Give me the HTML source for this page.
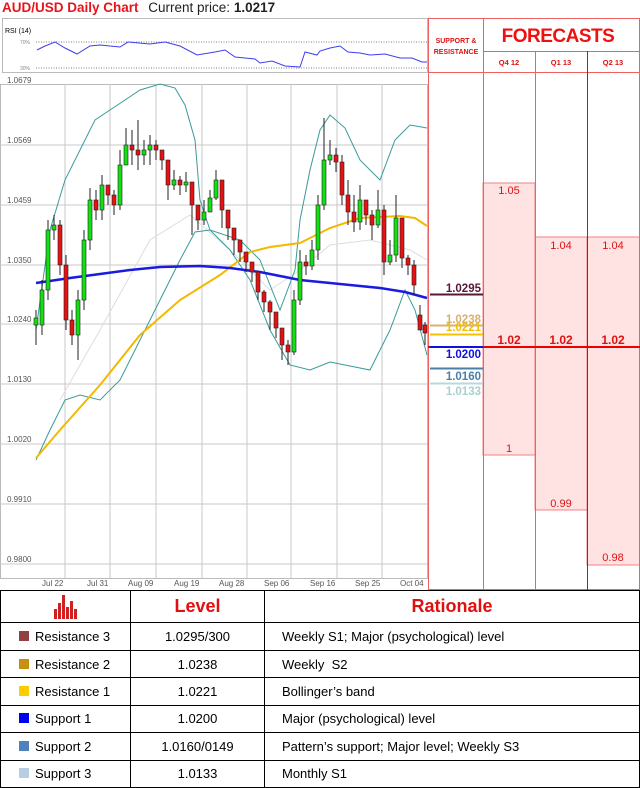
<!DOCTYPE html>
<html><head><meta charset="utf-8"><style>
body{margin:0;width:640px;height:788px;background:#fff;font-family:"Liberation Sans",sans-serif;overflow:hidden;position:relative}
.t{position:absolute;white-space:nowrap}
table{border-collapse:collapse;position:absolute;left:0;top:590px;width:640px;height:198px;table-layout:fixed}
td{border:1px solid #000;font-size:13px;padding:0;overflow:hidden;white-space:nowrap}
tr{height:27px}
</style></head><body>
<div class="t" style="left:2px;top:0;font-size:13.5px;color:#e8141c;font-weight:bold">AUD/USD Daily Chart <span style="color:#222;font-weight:normal;margin-left:6px">Current price: <b>1.0217</b></span></div>
<svg width="640" height="590" style="position:absolute;left:0;top:0" font-family="Liberation Sans">
<rect x="2.5" y="18.5" width="425" height="54" fill="#fff" stroke="#bbb"/>
<text x="5" y="33" font-size="7" fill="#000">RSI (14)</text>
<text x="20" y="44" font-size="5" fill="#888">70%</text><text x="20" y="70" font-size="5" fill="#888">30%</text>
<line x1="36" y1="42" x2="427" y2="42" stroke="#555" stroke-dasharray="1,1.5" stroke-width=".7"/>
<line x1="36" y1="68" x2="427" y2="68" stroke="#555" stroke-dasharray="1,1.5" stroke-width=".7"/>
<polyline fill="none" stroke="#3d3df0" stroke-width="1" points="37,50 45,46 55,42 65,48 77,54 90,46 100,45 120,47 128,42 150,44 165,42 180,46 197,55 215,52 225,50 235,57 255,59 260,63 272,61 285,66 300,67 305,52 317,55 320,51 330,48 340,46 348,52 360,53 370,55 385,54 400,58 412,58 422,62 427,62"/>
<rect x="0.5" y="84.5" width="427" height="494" fill="none" stroke="#bbb"/>
<g stroke="#c8c8c8" stroke-width="1">
<line x1="0" y1="145" x2="427" y2="145"/><line x1="0" y1="205" x2="427" y2="205"/><line x1="0" y1="265" x2="427" y2="265"/><line x1="0" y1="324" x2="427" y2="324"/><line x1="0" y1="384" x2="427" y2="384"/><line x1="0" y1="444" x2="427" y2="444"/><line x1="0" y1="504" x2="427" y2="504"/><line x1="0" y1="564" x2="427" y2="564"/>
<line x1="65" y1="84" x2="65" y2="578"/><line x1="110" y1="84" x2="110" y2="578"/><line x1="156" y1="84" x2="156" y2="578"/><line x1="202" y1="84" x2="202" y2="578"/><line x1="247" y1="84" x2="247" y2="578"/><line x1="291" y1="84" x2="291" y2="578"/><line x1="337" y1="84" x2="337" y2="578"/><line x1="382" y1="84" x2="382" y2="578"/>
</g>
<g font-size="8" fill="#555">
<text x="7" y="83">1.0679</text><text x="7" y="143">1.0569</text><text x="7" y="203">1.0459</text><text x="7" y="263">1.0350</text><text x="7" y="322">1.0240</text><text x="7" y="382">1.0130</text><text x="7" y="442">1.0020</text><text x="7" y="502">0.9910</text><text x="7" y="562">0.9800</text>
<text x="42" y="586">Jul 22</text><text x="87" y="586">Jul 31</text><text x="128" y="586">Aug 09</text><text x="174" y="586">Aug 19</text><text x="219" y="586">Aug 28</text><text x="264" y="586">Sep 06</text><text x="310" y="586">Sep 16</text><text x="355" y="586">Sep 25</text><text x="400" y="586">Oct 04</text>
</g>
<polyline fill="none" stroke="#ddd" points="60,400 100,330 150,240 190,215 230,250 270,290 300,270 330,245 370,240 410,250 427,260"/>
<polyline fill="none" stroke="#3a9a9a" stroke-width="1" points="36,330 50,230 65,180 80,150 95,120 110,110 125,100 140,90 160,84 175,88 185,105 195,140 200,200 210,230 240,240 260,260 280,310 295,270 300,220 310,170 320,130 330,115 345,128 360,160 380,180 395,140 410,125 427,128"/>
<polyline fill="none" stroke="#3a9a9a" stroke-width="1" points="36,460 50,430 65,400 80,395 100,400 120,380 140,340 160,300 180,260 195,232 210,230 230,250 250,280 270,330 290,365 310,370 330,362 350,366 370,370 390,330 405,290 415,310 427,355"/>
<polyline fill="none" stroke="#f5b800" stroke-width="2" points="36,458 60,430 100,385 140,335 180,300 220,275 250,252 270,247 300,243 330,228 360,218 400,216 415,218 427,226"/>
<polyline fill="none" stroke="#1a1ae0" stroke-width="2.5" points="36,283 70,278 100,274 130,270 160,267 200,266 230,268 260,272 300,280 340,284 380,288 405,292 427,298"/>
<g stroke="#222" stroke-width="1">
<path d="M36 310V345M42 280V335M48 220V300M54 215V240M60 220V275M66 255V330M72 310V345M78 290V360M84 230V310M90 188V250M96 190V220M102 175V220M108 185V205M114 190V215M120 150V210M126 128V160M132 130V165M138 120V170M144 140V165M150 135V165M156 140V160M162 150V170M168 168V200M174 170V190M180 176V195M186 172V192M192 195V235M198 205V230M204 200V225M210 190V210M216 170V200M222 200V228M228 215V240M234 230V255M240 242V262M246 252V272M252 262V282M258 280V300M264 290V312M270 300V330M276 318V338M282 335V360M288 340V365M294 290V355M300 250V305M306 255V275M312 240V270M318 195V260M324 118V210M330 140V165M336 148V172M342 155V205M348 180V225M354 195V232M360 185V230M366 200V225M372 210V240M378 190V228M384 205V275M390 240V265M396 195V262M402 245V268M408 255V275M414 260V295M420 305V330M425 322V345"/>
</g>
<g stroke="#222" stroke-width=".6">
<g fill="#11e011">
<rect x="34" y="318" width="4" height="7"/><rect x="40" y="290" width="4" height="35"/><rect x="46" y="230" width="4" height="60"/><rect x="52" y="225" width="4" height="5"/><rect x="76" y="300" width="4" height="35"/><rect x="82" y="240" width="4" height="60"/><rect x="88" y="200" width="4" height="40"/><rect x="100" y="185" width="4" height="25"/><rect x="118" y="165" width="4" height="40"/><rect x="124" y="145" width="4" height="20"/><rect x="142" y="150" width="4" height="5"/><rect x="148" y="145" width="4" height="5"/><rect x="172" y="180" width="4" height="5"/><rect x="184" y="182" width="4" height="3"/><rect x="202" y="212" width="4" height="8"/><rect x="208" y="198" width="4" height="14"/><rect x="214" y="180" width="4" height="18"/><rect x="292" y="300" width="4" height="52"/><rect x="298" y="262" width="4" height="38"/><rect x="310" y="250" width="4" height="16"/><rect x="316" y="205" width="4" height="45"/><rect x="322" y="160" width="4" height="45"/><rect x="328" y="155" width="4" height="5"/><rect x="358" y="200" width="4" height="22"/><rect x="376" y="210" width="4" height="15"/><rect x="388" y="255" width="4" height="7"/><rect x="394" y="218" width="4" height="37"/>
</g>
<g fill="#e81010">
<rect x="58" y="225" width="4" height="40"/><rect x="64" y="265" width="4" height="55"/><rect x="70" y="320" width="4" height="15"/><rect x="94" y="200" width="4" height="10"/><rect x="106" y="185" width="4" height="10"/><rect x="112" y="195" width="4" height="10"/><rect x="130" y="145" width="4" height="5"/><rect x="136" y="150" width="4" height="5"/><rect x="154" y="145" width="4" height="5"/><rect x="160" y="150" width="4" height="10"/><rect x="166" y="160" width="4" height="25"/><rect x="178" y="180" width="4" height="5"/><rect x="190" y="182" width="4" height="23"/><rect x="196" y="205" width="4" height="15"/><rect x="220" y="180" width="4" height="30"/><rect x="226" y="210" width="4" height="18"/><rect x="232" y="228" width="4" height="12"/><rect x="238" y="240" width="4" height="12"/><rect x="244" y="252" width="4" height="10"/><rect x="250" y="262" width="4" height="10"/><rect x="256" y="272" width="4" height="20"/><rect x="262" y="292" width="4" height="10"/><rect x="268" y="302" width="4" height="10"/><rect x="274" y="312" width="4" height="16"/><rect x="280" y="328" width="4" height="17"/><rect x="286" y="345" width="4" height="7"/><rect x="304" y="262" width="4" height="4"/><rect x="334" y="155" width="4" height="7"/><rect x="340" y="162" width="4" height="33"/><rect x="346" y="195" width="4" height="17"/><rect x="352" y="212" width="4" height="10"/><rect x="364" y="200" width="4" height="15"/><rect x="370" y="215" width="4" height="10"/><rect x="382" y="210" width="4" height="52"/><rect x="400" y="218" width="4" height="40"/><rect x="406" y="258" width="4" height="7"/><rect x="412" y="265" width="4" height="20"/><rect x="418" y="315" width="4" height="15"/><rect x="423" y="325" width="4" height="8"/>
</g></g>
<!-- right panel -->
<rect x="483" y="72" width="157" height="518" fill="#fff"/>
<rect x="483" y="183" width="52" height="272" fill="#ffe3e3" stroke="#f08080"/>
<rect x="535" y="237" width="52" height="273" fill="#ffe3e3" stroke="#f08080"/>
<rect x="587" y="237" width="53" height="328" fill="#ffe3e3" stroke="#f08080"/>
<g stroke="#f06060" fill="none">
<rect x="428.5" y="18.5" width="211" height="571"/>
<line x1="483.5" y1="18" x2="483.5" y2="590"/>
<line x1="483" y1="51.5" x2="640" y2="51.5"/>
<line x1="428" y1="72.5" x2="640" y2="72.5"/>
<line x1="535.5" y1="51" x2="535.5" y2="590"/>
</g>
<line x1="587.5" y1="51" x2="587.5" y2="590" stroke="#e00" stroke-width="1"/>
<text x="558" y="42" font-size="19" font-weight="bold" fill="#f01010" text-anchor="middle" letter-spacing="-.5">FORECASTS</text>
<text x="456" y="43" font-size="7" font-weight="bold" fill="#e01010" text-anchor="middle">SUPPORT &amp;</text>
<text x="456" y="54" font-size="7" font-weight="bold" fill="#e01010" text-anchor="middle">RESISTANCE</text>
<g font-size="7.5" font-weight="bold" fill="#e01010" text-anchor="middle"><text x="509" y="65">Q4 12</text><text x="561" y="65">Q1 13</text><text x="613" y="65">Q2 13</text></g>
<g font-size="11" fill="#e01010" text-anchor="middle"><text x="509" y="194">1.05</text><text x="561" y="249">1.04</text><text x="613" y="249">1.04</text><text x="509" y="452">1</text><text x="561" y="507">0.99</text><text x="613" y="561">0.98</text></g>
<g font-size="12" font-weight="bold" fill="#e01010" text-anchor="middle"><text x="509" y="344">1.02</text><text x="561" y="344">1.02</text><text x="613" y="344">1.02</text></g>
<line x1="428" y1="347" x2="640" y2="347" stroke="#e00" stroke-width="2"/>
<line x1="430" y1="294.5" x2="483" y2="294.5" stroke="#5a1838" stroke-width="2"/>
<line x1="430" y1="325.5" x2="483" y2="325.5" stroke="#d8b070" stroke-width="2"/>
<line x1="430" y1="334.5" x2="483" y2="334.5" stroke="#f5c000" stroke-width="2"/>
<line x1="430" y1="347" x2="483" y2="347" stroke="#1010e0" stroke-width="2"/>
<line x1="430" y1="368.5" x2="483" y2="368.5" stroke="#4a80a8" stroke-width="2"/>
<line x1="430" y1="383.5" x2="483" y2="383.5" stroke="#b8dada" stroke-width="2"/>
<g font-size="11.5" font-weight="bold" text-anchor="end">
<text x="481" y="292" fill="#5a1838">1.0295</text>
<text x="481" y="323" fill="#d8b070">1.0238</text>
<text x="481" y="331" fill="#f0c000">1.0221</text>
<text x="481" y="358" fill="#1010e0">1.0200</text>
<text x="481" y="380" fill="#4a80a8">1.0160</text>
<text x="481" y="395" fill="#a8d0d0">1.0133</text>
</g>
</svg>
<table>
<tr style="height:32px"><td style="width:129px;text-align:center"><svg width="28" height="24" viewBox="0 0 28 24" style="vertical-align:middle"><g fill="#d02020"><rect x="2" y="14" width="3" height="10"/><rect x="6" y="8" width="3" height="16"/><rect x="10" y="0" width="3" height="24"/><rect x="14" y="12" width="3" height="12"/><rect x="18" y="6" width="3" height="18"/><rect x="22" y="14" width="3" height="10"/></g></svg></td><td style="width:133px;text-align:center;color:#e01010;font-weight:bold;font-size:18px">Level</td><td style="text-align:center;color:#e01010;font-weight:bold;font-size:18px">Rationale</td></tr>
<tr><td style="padding-left:18px"><span style="display:inline-block;width:10px;height:10px;background:#904040;margin-right:6px"></span>Resistance 3</td><td style="text-align:center">1.0295/300</td><td style="padding-left:17px">Weekly S1; Major (psychological) level</td></tr>
<tr><td style="padding-left:18px"><span style="display:inline-block;width:10px;height:10px;background:#c89010;margin-right:6px"></span>Resistance 2</td><td style="text-align:center">1.0238</td><td style="padding-left:17px">Weekly&nbsp; S2</td></tr>
<tr><td style="padding-left:18px"><span style="display:inline-block;width:10px;height:10px;background:#ffcc00;margin-right:6px"></span>Resistance 1</td><td style="text-align:center">1.0221</td><td style="padding-left:17px">Bollinger’s band</td></tr>
<tr><td style="padding-left:18px"><span style="display:inline-block;width:10px;height:10px;background:#0000f0;margin-right:6px"></span>Support 1</td><td style="text-align:center">1.0200</td><td style="padding-left:17px">Major (psychological) level</td></tr>
<tr><td style="padding-left:18px"><span style="display:inline-block;width:10px;height:10px;background:#4f81bd;margin-right:6px"></span>Support 2</td><td style="text-align:center">1.0160/0149</td><td style="padding-left:17px">Pattern’s support; Major level; Weekly S3</td></tr>
<tr><td style="padding-left:18px"><span style="display:inline-block;width:10px;height:10px;background:#b8cce4;margin-right:6px"></span>Support 3</td><td style="text-align:center">1.0133</td><td style="padding-left:17px">Monthly S1</td></tr>
</table>
</body></html>
